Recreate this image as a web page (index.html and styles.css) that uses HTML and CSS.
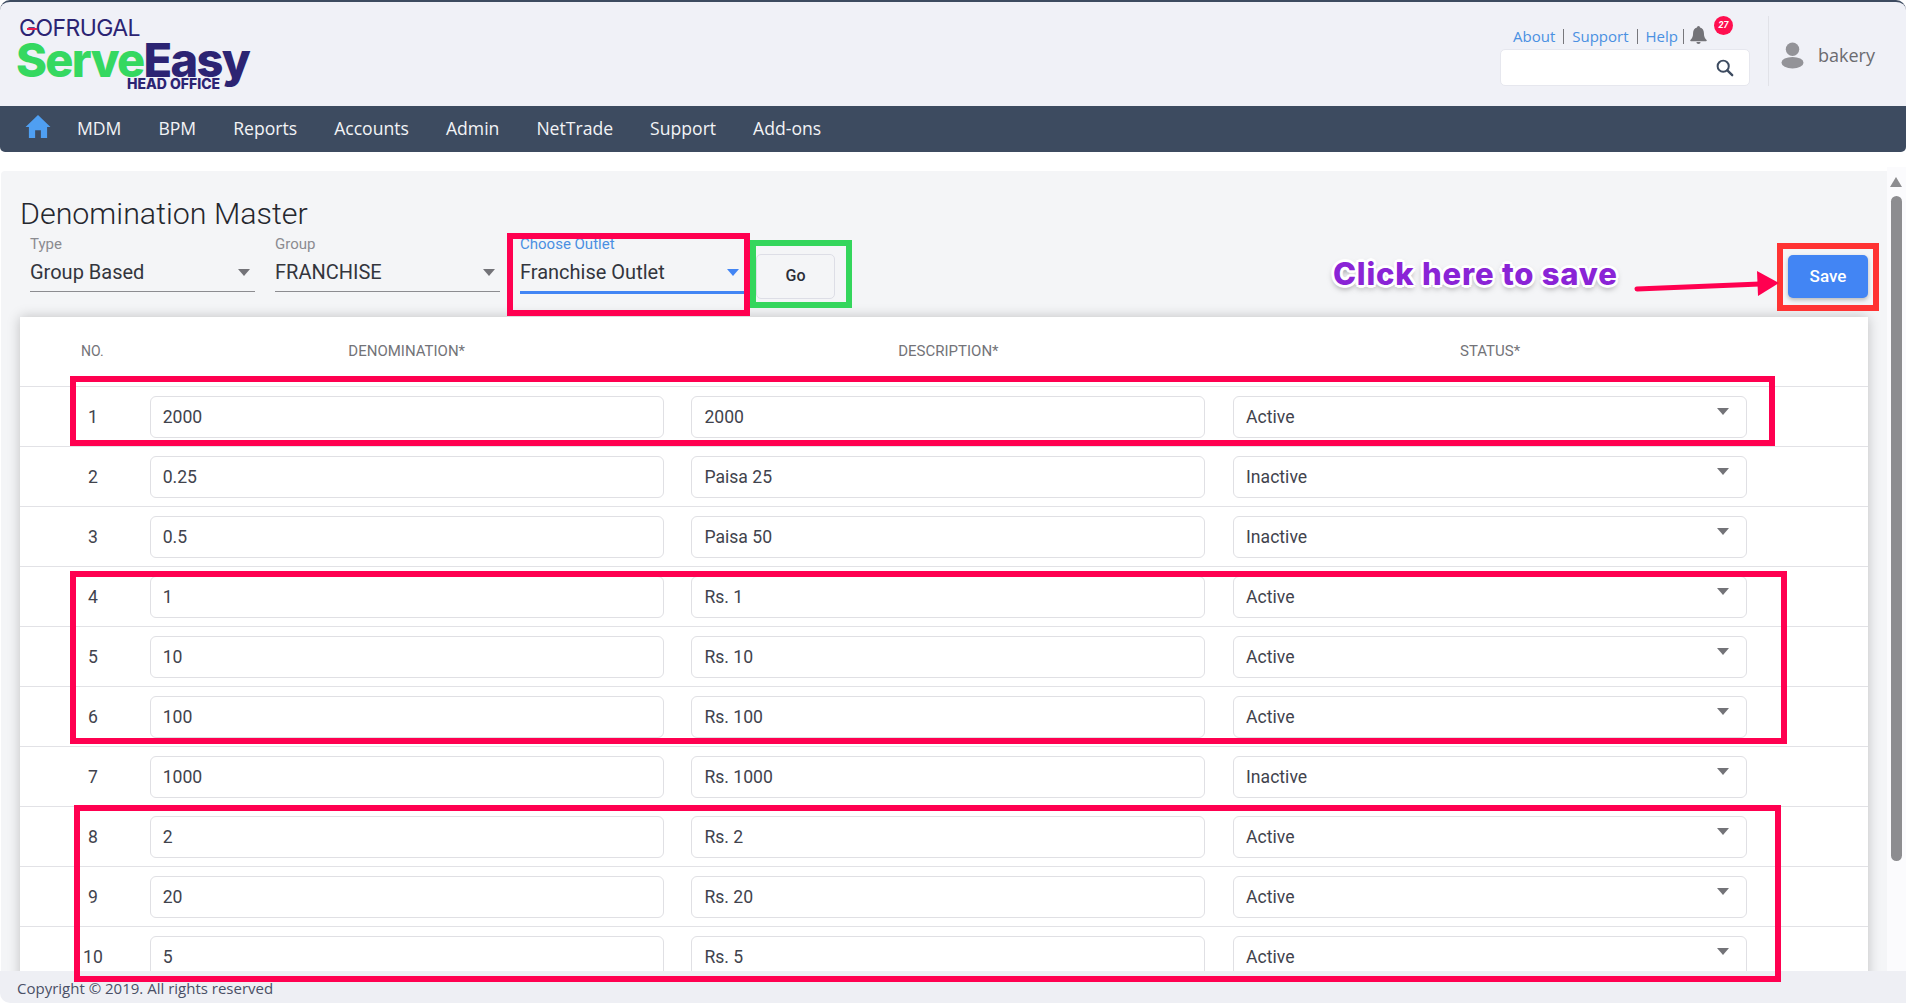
FILE: index.html
```html
<!DOCTYPE html>
<html lang="en">
<head>
<meta charset="utf-8">
<title>Denomination Master</title>
<link rel="stylesheet" href="styles.css">
</head>
<body>
<div class="app">
  <header class="top">
    <div class="logo">
      <div class="logo-brand">G<span class="logo-dash"></span>OFRUGAL</div>
      <div class="logo-name"><span class="serve">Serve</span><span class="easy">Easy</span></div>
      <div class="logo-sub">HEAD OFFICE</div>
    </div>
    <div class="top-right">
      <div class="util">
        <div class="links">
          <a>About</a><a class="sep">Support</a><a class="sep">Help</a><span class="bell-wrap">
            <svg class="bell" viewBox="0 0 20 20"><path d="M10 0.5a1.6 1.6 0 0 0-1.6 1.7C5.6 3 4.3 5.3 4.3 8c0 4-1 5.6-2.8 7.3-.4.4-.2 1.2.6 1.2h15.800c.8 0 1-.8.6-1.200C16.700 13.600 15.700 12 15.700 8c0-2.700-1.300-5-4.100-5.800A1.600 1.600 0 0 0 10 .5zM7.800 17.400a2.200 2.200 0 0 0 4.400 0z"/></svg>
            <span class="badge">27</span></span>
        </div>
        <div class="search">
          <svg class="search-ic" viewBox="0 0 20 20"><circle cx="8" cy="8" r="6.200" fill="none" stroke="#3d4b60" stroke-width="2.200"/><path d="M12.600 12.600 18 18" stroke="#3d4b60" stroke-width="2.600" stroke-linecap="round"/></svg>
        </div>
      </div>
      <div class="user">
        <svg class="user-ic" viewBox="0 0 24 28"><circle cx="12" cy="8" r="7" fill="#939398"/><ellipse cx="12" cy="22" rx="11.500" ry="6" fill="#939398"/></svg>
        <span class="user-name">bakery</span>
      </div>
    </div>
  </header>
  <nav class="nav">
    <svg class="home" viewBox="0 0 26 24"><path d="M13 0 26 12.500h-3.500V24h-6.500v-8h-6v8H3.500V12.500H0z" fill="#4f9ff2"/></svg>
    <a>MDM</a><a>BPM</a><a>Reports</a><a>Accounts</a><a>Admin</a><a>NetTrade</a><a>Support</a><a>Add-ons</a>
  </nav>
  <main class="content">
    <div class="scroll-area">
      <h1 class="title">Denomination Master</h1>
      <div class="filters">
        <div class="field"><label>Type</label><div class="value">Group Based<i class="caret"></i></div></div>
        <div class="field"><label>Group</label><div class="value">FRANCHISE<i class="caret"></i></div></div>
        <div class="field focus"><label>Choose Outlet</label><div class="value">Franchise Outlet<i class="caret"></i></div></div>
        <button class="go">Go</button>
        <button class="save">Save</button>
      </div>
      <section class="card">
        <div class="row head"><div class="num">NO.</div><div class="cell">DENOMINATION*</div><div class="cell">DESCRIPTION*</div><div class="cell">STATUS*</div></div>
        <div class="row"><div class="num">1</div><div class="input">2000</div><div class="input">2000</div><div class="input">Active<i class="caret small"></i></div></div>
        <div class="row"><div class="num">2</div><div class="input">0.25</div><div class="input">Paisa 25</div><div class="input">Inactive<i class="caret small"></i></div></div>
        <div class="row"><div class="num">3</div><div class="input">0.5</div><div class="input">Paisa 50</div><div class="input">Inactive<i class="caret small"></i></div></div>
        <div class="row"><div class="num">4</div><div class="input">1</div><div class="input">Rs. 1</div><div class="input">Active<i class="caret small"></i></div></div>
        <div class="row"><div class="num">5</div><div class="input">10</div><div class="input">Rs. 10</div><div class="input">Active<i class="caret small"></i></div></div>
        <div class="row"><div class="num">6</div><div class="input">100</div><div class="input">Rs. 100</div><div class="input">Active<i class="caret small"></i></div></div>
        <div class="row"><div class="num">7</div><div class="input">1000</div><div class="input">Rs. 1000</div><div class="input">Inactive<i class="caret small"></i></div></div>
        <div class="row"><div class="num">8</div><div class="input">2</div><div class="input">Rs. 2</div><div class="input">Active<i class="caret small"></i></div></div>
        <div class="row"><div class="num">9</div><div class="input">20</div><div class="input">Rs. 20</div><div class="input">Active<i class="caret small"></i></div></div>
        <div class="row"><div class="num">10</div><div class="input">5</div><div class="input">Rs. 5</div><div class="input">Active<i class="caret small"></i></div></div>
      </section>
    </div>
    <div class="scrollbar"><i class="sb-up"></i><i class="sb-thumb"></i></div>
  </main>
  <footer class="foot">Copyright © 2019. All rights reserved</footer>

  <div class="mark pink m-outlet"></div>
  <div class="mark green m-go"></div>
  <div class="mark red m-save"></div>
  <div class="mark pink m-r1"></div>
  <div class="mark pink m-r2"></div>
  <div class="mark pink m-r3"></div>
  <div class="callout">Click here to save</div>
  <svg class="arrow" viewBox="0 0 146 30"><path d="M3 20 126 15" stroke="#ff0050" stroke-width="5" stroke-linecap="round" fill="none"/><path d="M123 2 145 14 124 27z" fill="#ff0050"/></svg>
</div>
</body>
</html>
```
FILE: styles.css
```css
* { box-sizing: border-box; }
html, body { margin: 0; height: 100%; overflow: hidden; }
body { background: #fff; font-family: "Roboto", "Liberation Sans", sans-serif; color: #2b2e38; }
.app { position: relative; width: 1906px; height: 1003px; display: flex; flex-direction: column; background: #fff; overflow: hidden; }

.top { height: 106px; border-top: 2px solid #3d4b60; background: #f0f1f7; border-radius: 10px 10px 0 0; display: flex; justify-content: space-between; flex: none; position: relative; }
.logo { padding: 15px 0 0 16px; width: 260px; position: relative; font-family: "Inter", "Liberation Sans", sans-serif; }
.logo-brand { font-size: 23px; line-height: 23px; letter-spacing: -0.600px; color: #2c2473; font-weight: 400; padding-left: 3px; position: relative; }
.logo-dash { position: absolute; left: 11px; top: 11px; width: 10px; height: 2px; background: #ee1c4e; }
.logo-name { font-size: 47px; line-height: 34px; font-weight: 800; letter-spacing: -1.700px; margin-top: 3px; white-space: nowrap; }
.serve { color: #35d860; }
.easy { color: #2c2473; }
.logo-sub { position: absolute; left: 127px; top: 75px; font-size: 14px; line-height: 13px; font-weight: 800; color: #2c2473; white-space: nowrap; }

.top-right { display: flex; padding-right: 30px; }
.util { width: 250px; margin-right: 18px; padding-top: 19px; }
.links { height: 28px; display: flex; align-items: center; padding: 2px 0 0 13px; font-family: "Open Sans", sans-serif; font-size: 15px; color: #4a90e2; white-space: nowrap; }
.links a { line-height: 15px; }
.sep { border-left: 1px solid #77777c; margin-left: 8px; padding-left: 8px; }
.bell-wrap { position: relative; display: block; height: 15px; width: 30px; margin-left: 5px; border-left: 1px solid #77777c; }
.bell { position: absolute; left: 5px; top: -4px; width: 19px; height: 20px; fill: #737378; }
.badge { position: absolute; left: 30px; top: -13px; width: 19px; height: 19px; border-radius: 50%; background: #ff0f4f; color: #fff; font: italic 700 9px/19px "Roboto", sans-serif; text-align: center; }
.search { height: 37px; background: #fff; border: 1px solid #e6e7ee; border-radius: 5px; display: flex; align-items: center; justify-content: flex-end; padding-right: 15px; }
.search-ic { width: 18px; height: 18px; }
.user { width: 108px; border-left: 1px solid #e1e2e8; height: 70px; margin-top: 14px; display: flex; align-items: center; padding: 8px 0 0 12px; gap: 14px; }
.user-ic { width: 23px; height: 28px; flex: none; }
.user-name { font: 18px "Open Sans", sans-serif; color: #6b6b70; }

.nav { height: 46px; flex: none; background: #3d4b60; border-radius: 0 0 5px 5px; display: flex; align-items: center; padding: 0 0 3px 25px; font-family: "Open Sans", sans-serif; font-size: 17.600px; color: #f2f3f6; }
.nav a { margin-right: 37px; }
.home { width: 26px; height: 23px; margin: -3px 26px 0 0; }

.content { margin-top: 19px; flex: 1; min-height: 0; display: flex; background: #f4f5f7; border-radius: 4px 0 0 0; margin-left: 1px; }
.scroll-area { flex: 1; min-width: 0; padding-left: 19px; overflow: hidden; }
.title { margin: 24px 0 0; height: 36px; padding-top: 1px; font-size: 30.400px; line-height: 36px; font-weight: 300; color: #25272e; white-space: nowrap; }
.filters { display: flex; align-items: flex-start; padding-left: 10px; height: 86px; position: relative; width: 1848px; }
.field { width: 225px; margin-right: 20px; position: relative; padding-top: 5px; height: 61px; border-bottom: 1px solid #8c8c90; flex: none; }
.field label { display: block; font-size: 15px; line-height: 16px; color: #8b8b90; }
.field .value { font-size: 20px; line-height: 24px; margin-top: 8px; color: #33353d; position: relative; }
.field.focus { border-bottom: 3px solid #4285f4; height: 63px; margin-right: 12px; width: 224px; }
.field.focus label { color: #4a90e2; }
.caret { position: absolute; right: 5px; top: 9px; border: 6px solid transparent; border-top: 7px solid #737378; border-bottom: 0; }
.field.focus .caret { border-top-color: #4285f4; }
.go { width: 79px; height: 45px; margin-top: 23px; padding: 0 0 2px; background: #f4f5f7; border: 1px solid #dddee6; border-radius: 5px; font: 500 16px "Roboto", sans-serif; color: #2b2e38; }
.save { margin-left: auto; width: 80px; height: 43px; margin-top: 24px; padding: 0 0 2px; background: #4285f4; color: #fff; border: 0; border-radius: 5px; font: 500 17px "Roboto", sans-serif; box-shadow: 0 2px 4px rgba(0,0,0,.25); }

.card { width: 1848px; background: #fff; box-shadow: 0 0 12px rgba(0,0,0,.22); }
.row { display: grid; grid-template-columns: 102px 514px 514px 514px; column-gap: 27.700px; align-items: center; height: 60px; border-top: 1px solid #e2e2e6; }
.row.head { height: 69px; border-top: 0; padding-bottom: 1px; font-size: 15px; color: #737378; }
.num { padding-left: 44px; text-align: center; font-size: 17.600px; color: #41434d; }
.row.head .num { font-size: 14px; color: #737378; text-align: left; padding-left: 61px; white-space: nowrap; }
.cell { text-align: center; }
.input { height: 42px; border: 1px solid #e0e0e4; border-radius: 6px; padding-left: 12px; font-size: 17.600px; line-height: 40px; color: #41434d; position: relative; background: #fff; }
.caret.small { right: 17px; top: 11px; }

.scrollbar { width: 19px; flex: none; position: relative; background: #fbfbfd; margin-top: -4px; }
.sb-up { position: absolute; left: 3px; top: 10px; border: 6.500px solid transparent; border-bottom: 10px solid #8d8d90; border-top: 0; }
.sb-thumb { position: absolute; left: 4px; top: 29px; width: 11px; height: 665px; background: #8d8d90; border-radius: 6px; }

.foot { height: 32px; flex: none; background: #eeeff4; border-radius: 0 0 0 10px; padding-left: 17px; font: 15px/34px "Open Sans", sans-serif; color: #4a5066; position: relative; z-index: 1; }

.mark { position: absolute; z-index: 2; pointer-events: none; }
.pink { border: 6px solid #ff0050; }
.green { border: 6px solid #34d65c; }
.red { border: 6px solid #ff3333; }
.m-outlet { left: 507px; top: 233px; width: 243px; height: 83px; }
.m-go { left: 750px; top: 240px; width: 102px; height: 68px; }
.m-save { left: 1777px; top: 243px; width: 102px; height: 68px; }
.m-r1 { left: 70px; top: 376px; width: 1705px; height: 70px; }
.m-r2 { left: 70px; top: 571px; width: 1717px; height: 173px; }
.m-r3 { left: 74px; top: 805px; width: 1707px; height: 177px; }
.callout { position: absolute; z-index: 3; left: 1333px; top: 254px; font: 800 31px/40px "Inter", "Liberation Sans", sans-serif; letter-spacing: 0.800px; color: #8a24d6; white-space: nowrap; text-shadow: 2px 0 0 #fff, -2px 0 0 #fff, 0 2px 0 #fff, 0 -2px 0 #fff, 2px 2px 0 #fff, -2px -2px 0 #fff, 2px -2px 0 #fff, -2px 2px 0 #fff, 3px 0 1px #fff, -3px 0 1px #fff, 0 3px 1px #fff, 0 -3px 1px #fff, 0 3px 6px rgba(0,0,0,.5); }
.arrow { position: absolute; z-index: 3; left: 1634px; top: 269px; width: 146px; height: 30px; }
```
